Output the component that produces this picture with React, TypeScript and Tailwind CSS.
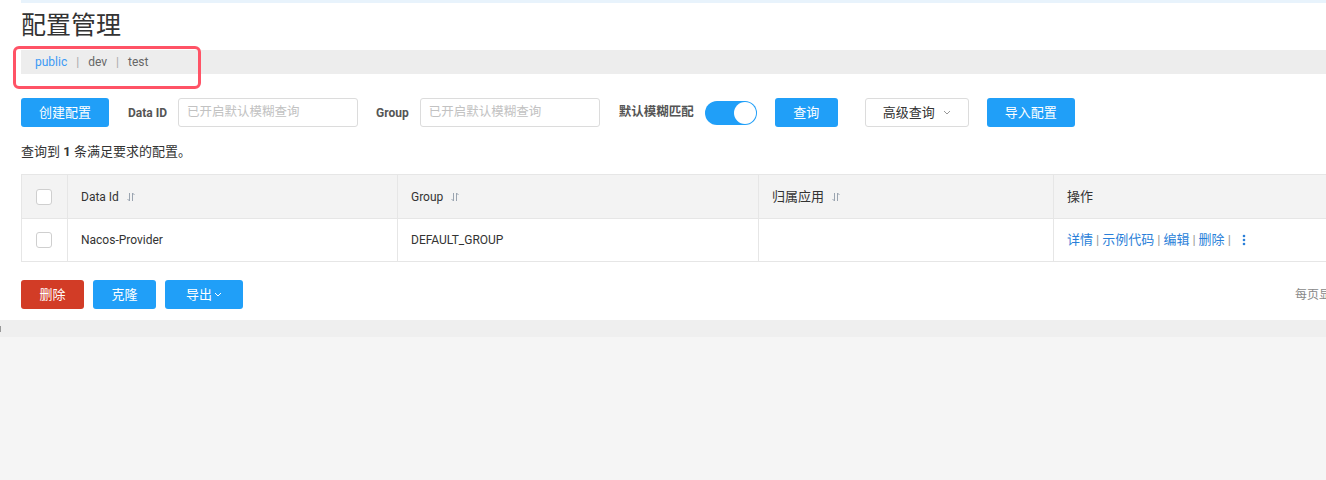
import React from 'react';

const font = "font-['Roboto','Noto_Sans_CJK_SC',sans-serif]";

function SortIcon() {
  return (
    <svg width="8" height="10" viewBox="0 0 8 10" className="inline-block ml-[8px] align-middle">
      <path d="M2.5 1 V9 L0.5 7" fill="none" stroke="#9aa4b0" strokeWidth="1" />
      <path d="M5.5 9 V1 L7.5 3" fill="none" stroke="#9aa4b0" strokeWidth="1" />
    </svg>
  );
}

function Checkbox() {
  return <span className="block w-[16px] h-[16px] rounded-[3px] border border-[#cfcfcf] bg-white" />;
}

function Chevron({ color = '#999' }: { color?: string }) {
  return (
    <svg width="8" height="5" viewBox="0 0 8 5" className="inline-block">
      <path d="M1 1 L4 4 L7 1" fill="none" stroke={color} strokeWidth="1" />
    </svg>
  );
}

export default function App() {
  return (
    <div className={`relative w-[1326px] h-[480px] overflow-hidden bg-white text-[#333] ${font}`}>
      <div className="pl-[21px] w-[1480px]">
        <div className="h-[3px] bg-[#e8f3fc]" />
        <h1 className="mt-[7px] text-[25px] leading-[32px] font-normal text-[#333]">配置管理</h1>

        <div className="mt-[8px] h-[24px] bg-[#ededed] flex items-center pl-[14px] text-[12px] text-[#666]">
          <span className="text-[#3b9af5]">public</span>
          <span className="mx-[9px] text-[#aaa]">|</span>
          <span>dev</span>
          <span className="mx-[9px] text-[#aaa]">|</span>
          <span>test</span>
        </div>

        <div className="mt-[24px] flex items-center h-[29px]">
          <button className="w-[88px] h-[29px] rounded-[3px] bg-[#209ff8] text-white text-[13px]">创建配置</button>
          <span className="ml-[19px] text-[12px] font-bold text-[#555]">Data ID</span>
          <div className="ml-[11px] w-[180px] h-[29px] border border-[#dcdcdc] rounded-[3px] flex items-center pl-[8px] text-[12.5px] text-[#c2c2c2]">已开启默认模糊查询</div>
          <span className="ml-[18px] text-[12px] font-bold text-[#555]">Group</span>
          <div className="ml-[11px] w-[180px] h-[29px] border border-[#dcdcdc] rounded-[3px] flex items-center pl-[8px] text-[12.5px] text-[#c2c2c2]">已开启默认模糊查询</div>
          <span className="ml-[19px] text-[12.5px] font-bold text-[#555]">默认模糊匹配</span>
          <div className="ml-[11px] w-[52px] h-[24px] rounded-full bg-[#209ff8] flex items-center justify-end pr-[1px]">
            <span className="block w-[22px] h-[22px] rounded-full bg-white" />
          </div>
          <button className="ml-[18px] w-[63px] h-[29px] rounded-[3px] bg-[#209ff8] text-white text-[13px]">查询</button>
          <button className="ml-[27px] w-[104px] h-[29px] rounded-[3px] border border-[#dcdcdc] bg-white text-[13px] text-[#333] flex items-center justify-center gap-[8px]">
            高级查询 <Chevron />
          </button>
          <button className="ml-[18px] w-[88px] h-[29px] rounded-[3px] bg-[#209ff8] text-white text-[13px]">导入配置</button>
        </div>

        <div className="mt-[15px] text-[13px] leading-[20px] text-[#333]">
          查询到 <span className="font-bold">1</span> 条满足要求的配置。
        </div>

        <table className="mt-[12px] border-collapse table-fixed text-[12px]">
          <colgroup>
            <col className="w-[46px]" />
            <col className="w-[330px]" />
            <col className="w-[361px]" />
            <col className="w-[295px]" />
            <col className="w-[420px]" />
          </colgroup>
          <thead>
            <tr className="h-[44px] bg-[#f3f3f3]">
              <th className="border border-[#e6e6e6] px-[14px]"><Checkbox /></th>
              <th className="border border-[#e6e6e6] pl-[13px] text-left font-normal">Data Id<SortIcon /></th>
              <th className="border border-[#e6e6e6] pl-[13px] text-left font-normal">Group<SortIcon /></th>
              <th className="border border-[#e6e6e6] pl-[13px] text-left font-normal text-[13px]">归属应用<SortIcon /></th>
              <th className="border border-[#e6e6e6] pl-[13px] text-left font-normal text-[13px]">操作</th>
            </tr>
          </thead>
          <tbody>
            <tr className="h-[43px]">
              <td className="border border-[#e6e6e6] px-[14px]"><Checkbox /></td>
              <td className="border border-[#e6e6e6] pl-[13px]">Nacos-Provider</td>
              <td className="border border-[#e6e6e6] pl-[13px]">DEFAULT_GROUP</td>
              <td className="border border-[#e6e6e6] pl-[13px]" />
              <td className="border border-[#e6e6e6] pl-[13px] text-[13px]">
                <div className="flex items-center text-[#2a7fd9]">
                  <span>详情</span>
                  <span className="mx-[3px] text-[#999]">|</span>
                  <span>示例代码</span>
                  <span className="mx-[3px] text-[#999]">|</span>
                  <span>编辑</span>
                  <span className="mx-[3px] text-[#999]">|</span>
                  <span>删除</span>
                  <span className="mx-[3px] text-[#999]">|</span>
                  <svg width="4" height="12" viewBox="0 0 4 12" className="ml-[8px]">
                    <circle cx="2" cy="2" r="1.3" fill="#2a7fd9" />
                    <circle cx="2" cy="6" r="1.3" fill="#2a7fd9" />
                    <circle cx="2" cy="10" r="1.3" fill="#2a7fd9" />
                  </svg>
                </div>
              </td>
            </tr>
          </tbody>
        </table>

        <div className="mt-[18px] flex items-center h-[29px]">
          <button className="w-[63px] h-[29px] rounded-[3px] bg-[#d23c26] text-white text-[13px]">删除</button>
          <button className="ml-[9px] w-[63px] h-[29px] rounded-[3px] bg-[#209ff8] text-white text-[13px]">克隆</button>
          <button className="ml-[9px] w-[78px] h-[29px] rounded-[3px] bg-[#209ff8] text-white text-[13px] flex items-center justify-center gap-[2px]">
            导出<Chevron color="#fff" />
          </button>
          <span className="ml-[1052px] text-[12px] text-[#888] whitespace-nowrap">每页显示：</span>
        </div>
      </div>

      <div className="mt-[11px] h-[17px] bg-[#efefef] flex items-center">
        <span className="block w-[1px] h-[6px] bg-[#999]" />
      </div>
      <div className="h-[200px] bg-[#f5f5f5]" />

      <div className="absolute left-[13px] top-[46px] w-[188px] h-[43px] rounded-[6px] border-[3px] border-[#ff5366]" />
    </div>
  );
}
